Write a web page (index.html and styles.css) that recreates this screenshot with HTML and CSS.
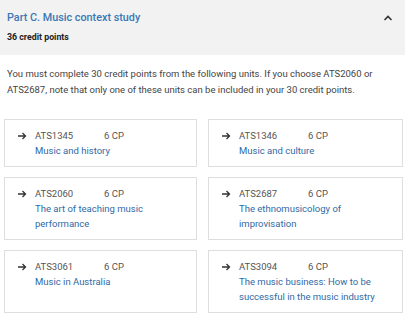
FILE: index.html
```html
<!DOCTYPE html>
<html>
<head>
  <link rel="stylesheet" href="styles.css">
</head>
<body>
  <div class="section-head">
    <div class="head-text">
      <h2 class="section-title">Part C. Music context study</h2>
      <div class="section-points">36 credit points</div>
    </div>
    <svg class="chevron" width="10" height="8" viewBox="0 0 10 8">
      <path d="M1.5 6 L5 2.5 L8.5 6" fill="none" stroke="#333" stroke-width="1.6" />
    </svg>
  </div>

  <p class="intro">You must complete 30 credit points from the following units. If you choose ATS2060 or ATS2687, note that only one of these units can be included in your 30 credit points.</p>

  <div class="units">
    <div class="unit">
      <svg class="arrow" width="10" height="10" viewBox="0 0 10 10"><path d="M1 5 H8.5 M5.5 2 L8.5 5 L5.5 8" fill="none" stroke="#333" stroke-width="1.3" /></svg>
      <div class="unit-body">
        <div class="unit-meta"><span class="unit-code">ATS1345</span><span>6 CP</span></div>
        <a class="unit-name">Music and history</a>
      </div>
    </div>
    <div class="unit">
      <svg class="arrow" width="10" height="10" viewBox="0 0 10 10"><path d="M1 5 H8.5 M5.5 2 L8.5 5 L5.5 8" fill="none" stroke="#333" stroke-width="1.3" /></svg>
      <div class="unit-body">
        <div class="unit-meta"><span class="unit-code">ATS1346</span><span>6 CP</span></div>
        <a class="unit-name">Music and culture</a>
      </div>
    </div>
    <div class="unit">
      <svg class="arrow" width="10" height="10" viewBox="0 0 10 10"><path d="M1 5 H8.5 M5.5 2 L8.5 5 L5.5 8" fill="none" stroke="#333" stroke-width="1.3" /></svg>
      <div class="unit-body">
        <div class="unit-meta"><span class="unit-code">ATS2060</span><span>6 CP</span></div>
        <a class="unit-name">The art of teaching music performance</a>
      </div>
    </div>
    <div class="unit">
      <svg class="arrow" width="10" height="10" viewBox="0 0 10 10"><path d="M1 5 H8.5 M5.5 2 L8.5 5 L5.5 8" fill="none" stroke="#333" stroke-width="1.3" /></svg>
      <div class="unit-body">
        <div class="unit-meta"><span class="unit-code">ATS2687</span><span>6 CP</span></div>
        <a class="unit-name">The ethnomusicology of improvisation</a>
      </div>
    </div>
    <div class="unit">
      <svg class="arrow" width="10" height="10" viewBox="0 0 10 10"><path d="M1 5 H8.5 M5.5 2 L8.5 5 L5.5 8" fill="none" stroke="#333" stroke-width="1.3" /></svg>
      <div class="unit-body">
        <div class="unit-meta"><span class="unit-code">ATS3061</span><span>6 CP</span></div>
        <a class="unit-name">Music in Australia</a>
      </div>
    </div>
    <div class="unit">
      <svg class="arrow" width="10" height="10" viewBox="0 0 10 10"><path d="M1 5 H8.5 M5.5 2 L8.5 5 L5.5 8" fill="none" stroke="#333" stroke-width="1.3" /></svg>
      <div class="unit-body">
        <div class="unit-meta"><span class="unit-code">ATS3094</span><span>6 CP</span></div>
        <a class="unit-name">The music business: How to be successful in the music industry</a>
      </div>
    </div>
  </div>
</body>
</html>
```

FILE: styles.css
```css
body {
  margin: 0;
  background: #fff;
  font-family: Roboto, "Liberation Sans", sans-serif;
  color: #333;
  overflow: hidden;
}

/* Section header band */
.section-head {
  display: flex;
  justify-content: space-between;
  align-items: flex-start;
  background: #f2f2f2;
  padding: 10px 12px 0 7px;
  height: 45px;
}

.section-title {
  margin: 0;
  font-size: 10.8px;
  font-weight: 500;
  color: #3a78b5;
  line-height: 15px;
}

.section-points {
  margin-top: 6px;
  font-size: 8.8px;
  line-height: 12px;
  font-weight: 700;
  color: #222;
}

.chevron {
  margin-top: 4px;
}

/* Intro paragraph */
.intro {
  margin: 11px 0 0;
  padding: 0 7px;
  font-size: 9.5px;
  line-height: 16px;
  color: #444;
}

/* Unit cards */
.units {
  display: grid;
  grid-template-columns: 193px 195px;
  column-gap: 11px;
  row-gap: 10px;
  padding: 21px 3px 0 4px;
}

.unit {
  display: flex;
  align-items: flex-start;
  border: 1px solid #dedede;
  padding: 8px 10px 8px 12px;
  min-height: 30px;
}

.unit:nth-child(n+3) {
  min-height: 45px;
}

.arrow {
  margin-top: 3px;
  flex-shrink: 0;
}

.unit-body {
  margin-left: 8px;
  font-size: 9.5px;
  line-height: 15px;
  max-width: 140px;
}

.unit-meta {
  color: #555;
}

.unit-code {
  display: inline-block;
  width: 69px;
}

.unit-name {
  display: block;
  color: #2f6aa6;
  cursor: pointer;
}
```
